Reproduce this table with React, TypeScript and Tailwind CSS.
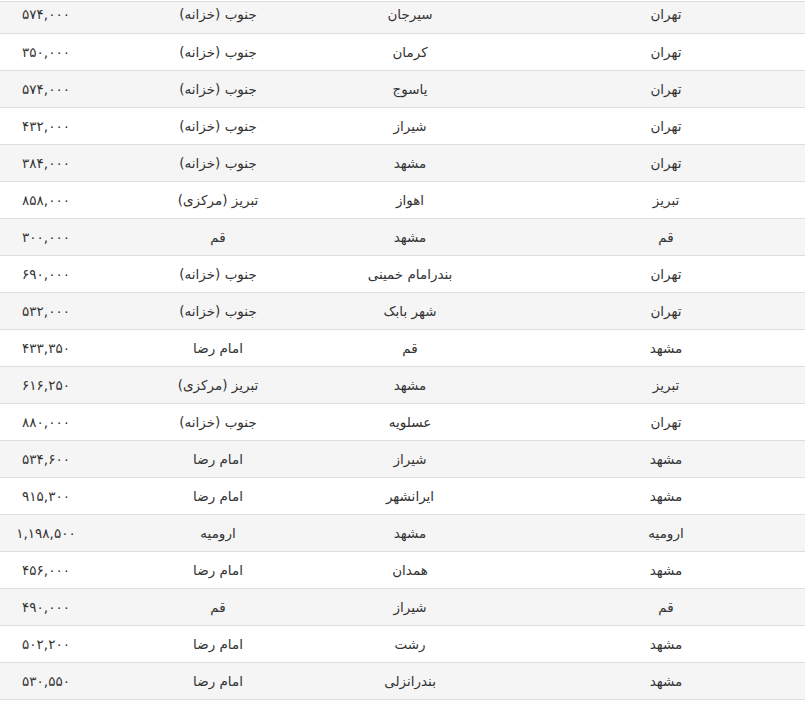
const rows: [string, string, string, string][] = [
  ["تهران", "سیرجان", "جنوب (خزانه)", "۵۷۴,۰۰۰"],
  ["تهران", "کرمان", "جنوب (خزانه)", "۳۵۰,۰۰۰"],
  ["تهران", "یاسوج", "جنوب (خزانه)", "۵۷۴,۰۰۰"],
  ["تهران", "شیراز", "جنوب (خزانه)", "۴۳۲,۰۰۰"],
  ["تهران", "مشهد", "جنوب (خزانه)", "۳۸۴,۰۰۰"],
  ["تبریز", "اهواز", "تبریز (مرکزی)", "۸۵۸,۰۰۰"],
  ["قم", "مشهد", "قم", "۳۰۰,۰۰۰"],
  ["تهران", "بندرامام خمینی", "جنوب (خزانه)", "۶۹۰,۰۰۰"],
  ["تهران", "شهر بابک", "جنوب (خزانه)", "۵۳۲,۰۰۰"],
  ["مشهد", "قم", "امام رضا", "۴۳۳,۳۵۰"],
  ["تبریز", "مشهد", "تبریز (مرکزی)", "۶۱۶,۲۵۰"],
  ["تهران", "عسلویه", "جنوب (خزانه)", "۸۸۰,۰۰۰"],
  ["مشهد", "شیراز", "امام رضا", "۵۳۴,۶۰۰"],
  ["مشهد", "ایرانشهر", "امام رضا", "۹۱۵,۳۰۰"],
  ["ارومیه", "مشهد", "ارومیه", "۱,۱۹۸,۵۰۰"],
  ["مشهد", "همدان", "امام رضا", "۴۵۶,۰۰۰"],
  ["قم", "شیراز", "قم", "۴۹۰,۰۰۰"],
  ["مشهد", "رشت", "امام رضا", "۵۰۲,۲۰۰"],
  ["مشهد", "بندرانزلی", "امام رضا", "۵۳۰,۵۵۰"],
];

export default function App() {
  return (
    <div
      dir="rtl"
      className="w-[805px] h-[702px] overflow-hidden bg-white pt-px text-[13.5px] text-[#333] font-['DejaVu_Sans',sans-serif]"
    >
      <div className="border-b border-[#dddddd]">
        {rows.map((r, i) => (
          <div
            key={i}
            className={`grid grid-cols-[329px_132px_252px_92px] border-t border-[#dddddd] ${
              i === 0 ? "h-[32px] pb-[6px]" : "h-[37px]"
            } ${i % 2 === 0 ? "bg-[#f5f5f5]" : "bg-white"}`}
          >
            <div className="flex items-center justify-center pl-[51px]">{r[0]}</div>
            <div className="flex items-center justify-center">{r[1]}</div>
            <div className="flex items-center justify-center">{r[2]}</div>
            <div className="flex items-center justify-center">{r[3]}</div>
          </div>
        ))}
      </div>
    </div>
  );
}
